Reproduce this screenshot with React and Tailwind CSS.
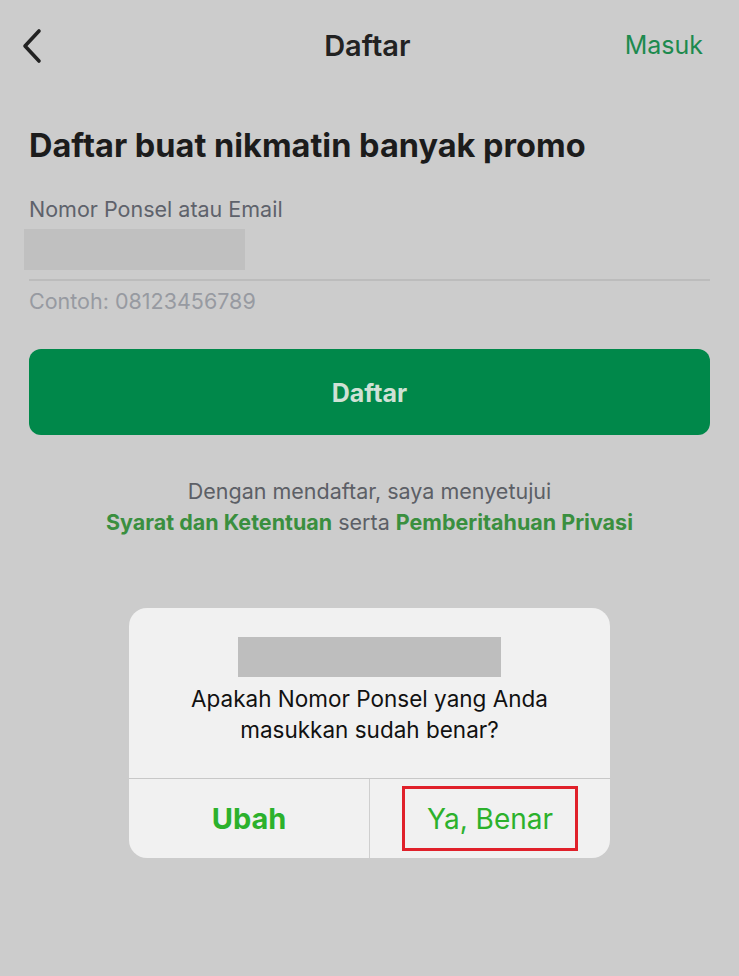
export default function App() {
  return (
    <div className="h-[976px] w-full overflow-hidden bg-[#cccccc] font-['Inter',sans-serif]">
      {/* Header */}
      <header className="flex h-[92px] items-center justify-between pl-[20px] pr-[36px]">
        <svg width="26" height="36" viewBox="0 0 26 36" fill="none">
          <path d="M19 3 L5 18 L19 33" stroke="#222" strokeWidth="3.6" strokeLinecap="round" strokeLinejoin="round" />
        </svg>
        <h1 className="ml-[64px] text-[29px] font-semibold text-[#222]">Daftar</h1>
        <span className="text-[25px] text-[#1d8a4e]">Masuk</span>
      </header>

      <main className="px-[29px]">
        <h2 className="mt-[34px] text-[32.5px] font-bold leading-[40px] text-[#1c1c1c]">
          Daftar buat nikmatin banyak promo
        </h2>

        {/* Input */}
        <div className="mt-[30px]">
          <label className="block text-[21.5px] leading-[26px] text-[#5e626b]">Nomor Ponsel atau Email</label>
          <div className="-ml-[5px] mt-[7px] h-[41px] w-[221px] bg-[#c0c0c0]" />
          <div className="mt-[9px] h-[2px] w-full bg-[#bcbcbc]" />
          <p className="mt-[7px] text-[21.5px] leading-[26px] text-[#979aa1]">Contoh: 08123456789</p>
        </div>

        <button className="mt-[35px] flex h-[86px] w-full items-center justify-center rounded-[12px] bg-[#00884a] pt-[3px] text-[25px] font-bold text-[#cfe1d5]">
          Daftar
        </button>

        <div className="mt-[41px] text-center text-[21.5px] leading-[31px]">
          <p className="text-[#5c5f66]">Dengan mendaftar, saya menyetujui</p>
          <p>
            <span className="font-bold text-[#3a8f3f]">Syarat dan Ketentuan</span>
            <span className="text-[#5c5f66]"> serta </span>
            <span className="font-bold text-[#3a8f3f]">Pemberitahuan Privasi</span>
          </p>
        </div>
      </main>

      {/* Dialog */}
      <div className="mt-[70px] flex justify-center">
        <div className="w-[481px] overflow-hidden rounded-[18px] bg-[#f1f1f1]">
          <div className="flex flex-col items-center pt-[29px] pb-[33px]">
            <div className="h-[40px] w-[263px] bg-[#bebebe]" />
            <p className="mt-[6px] text-center text-[22.5px] leading-[31px] text-[#111]">
              Apakah Nomor Ponsel yang Anda
              <br />
              masukkan sudah benar?
            </p>
          </div>
          <div className="flex h-[80px] border-t border-[#c8c8c8]">
            <button className="flex flex-1 items-center justify-center border-r border-[#cfcfcf] text-[29px] font-bold text-[#2cb12c]">
              Ubah
            </button>
            <div className="flex flex-1 items-start justify-center pt-[7px]">
              <span className="flex h-[65px] w-[176px] items-center justify-center border-[3px] border-[#e0202a] text-[28px] text-[#2cb12c]">
                Ya, Benar
              </span>
            </div>
          </div>
        </div>
      </div>
    </div>
  );
}
